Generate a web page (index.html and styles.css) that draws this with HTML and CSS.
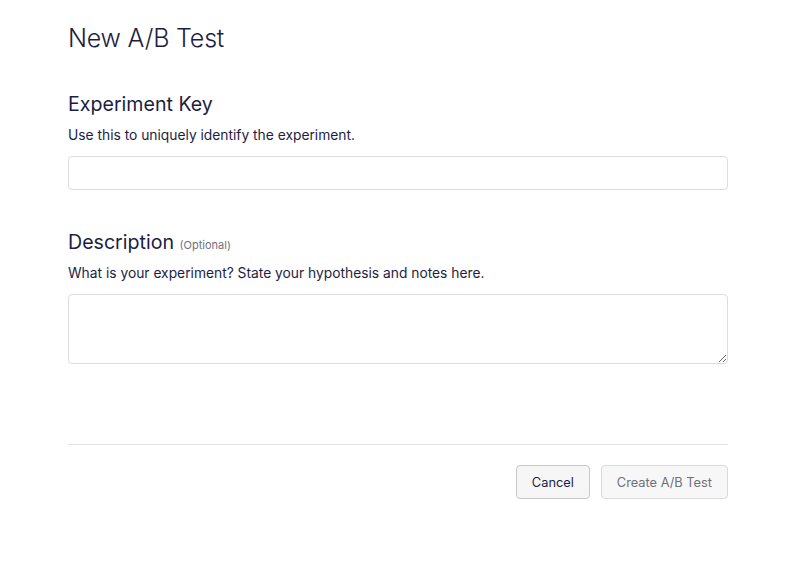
FILE: index.html
```html
<!DOCTYPE html>
<html>
<head>
<meta charset="utf-8">
<link rel="stylesheet" href="styles.css">
</head>
<body>
<div class="page">
  <h1 class="title">New A/B Test</h1>
  <section class="field first">
    <h2 class="label">Experiment Key</h2>
    <p class="help">Use this to uniquely identify the experiment.</p>
    <input class="input" type="text">
  </section>
  <section class="field second">
    <h2 class="label">Description <span class="optional">(Optional)</span></h2>
    <p class="help">What is your experiment? State your hypothesis and notes here.</p>
    <textarea class="textarea"></textarea>
  </section>
  <div class="footer">
    <button class="btn btn-cancel">Cancel</button>
    <button class="btn btn-create" disabled>Create A/B Test</button>
  </div>
</div>
</body>
</html>
```
FILE: styles.css
```css
* { box-sizing: border-box; }
body {
  margin: 0;
  background: #fff;
  font-family: Inter, "Open Sans", sans-serif;
  color: #1d1d42;
}
.page {
  width: 660px;
  margin-left: 68px;
  padding-top: 22px;
}
.title {
  margin: 0;
  font-size: 25px;
  font-weight: 300;
  line-height: 32px;
  letter-spacing: -0.2px;
}
.field.first { margin-top: 38px; }
.field.second { margin-top: 40px; }
.label {
  margin: 0;
  font-size: 19.6px;
  font-weight: 400;
  line-height: 24px;
  height: 24px;
}
.optional {
  font-size: 11px;
  line-height: 0;
  color: #707080;
}
.help {
  margin: 9px 0 0;
  font-size: 13.8px;
  line-height: 20px;
}
.input {
  display: block;
  margin-top: 11px;
  width: 100%;
  height: 34px;
  border: 1px solid #dcdcdc;
  border-radius: 4px;
  outline: none;
}
.textarea {
  display: block;
  margin-top: 11px;
  width: 100%;
  height: 70px;
  border: 1px solid #dcdcdc;
  border-radius: 4px;
  resize: vertical;
  outline: none;
}
.footer {
  margin-top: 80px;
  border-top: 1px solid #e3e3e3;
  padding-top: 20px;
  display: flex;
  justify-content: flex-end;
  gap: 11px;
}
.btn {
  height: 34px;
  padding: 0 15px;
  border: 1px solid #c8c8c8;
  border-radius: 4px;
  background: #f6f6f6;
  font-family: Inter, "Open Sans", sans-serif;
  font-size: 12.8px;
  color: #1d1d42;
}
.btn-create {
  border-color: #dadada;
  color: #707078;
  background: #f7f7f7;
}
```
